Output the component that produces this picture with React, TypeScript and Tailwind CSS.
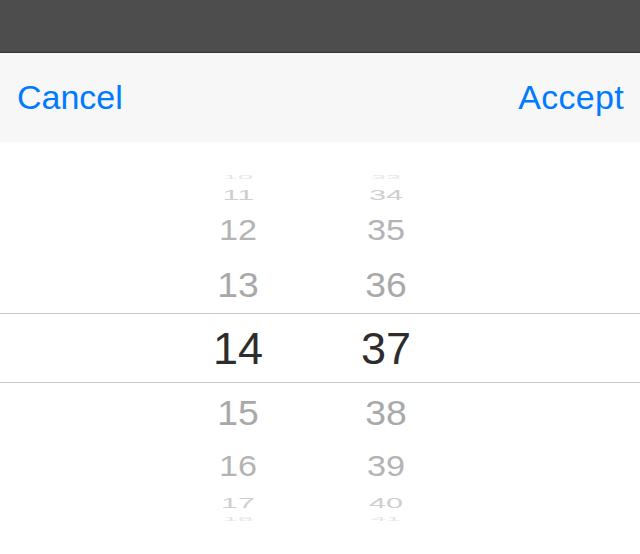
import React from "react";

// wheel rings, from the outermost (barely visible) to the one next to the selection
const rings = [
  { h: "h-[12px]", scale: "scale-x-[0.6] scale-y-[0.1]", color: "text-[#e6e6e6]" },
  { h: "h-[22px]", scale: "scale-x-[0.68] scale-y-[0.34]", color: "text-[#cfcfcf]" },
  { h: "h-[50px]", scale: "scale-x-[0.76] scale-y-[0.64]", color: "text-[#b4b4b4]" },
  { h: "h-[58px]", scale: "scale-x-[0.83] scale-y-[0.79]", color: "text-[#a9a9a9]" },
];

const hour = 14;
const minute = 37;

function WheelRow({ offset }: { offset: number }) {
  const ring = rings[4 - Math.abs(offset)];
  return (
    <div className={`flex ${ring.h} items-center justify-center pr-[16px]`}>
      {[hour + offset, minute + offset].map((n) => (
        <div key={n} className="flex w-[148px] items-center justify-center">
          <span className={`block text-[45px] leading-none ${ring.color} ${ring.scale}`}>{n}</span>
        </div>
      ))}
    </div>
  );
}

export default function App() {
  return (
    <div
      className="flex h-[554px] w-full flex-col overflow-hidden bg-white"
      style={{ fontFamily: '"Liberation Sans", Arial, sans-serif' }}
    >
      {/* dark backdrop */}
      <div className="h-[53px] border-b border-[#333333] bg-[#4d4d4d]" />

      {/* toolbar */}
      <div className="flex h-[89px] items-center justify-between bg-[#f7f7f7] pb-[1px] pl-[17px] pr-[16px]">
        <button className="text-[34px] leading-none text-[#007aff]">Cancel</button>
        <button className="text-[34px] leading-none tracking-[0.3px] text-[#007aff]">Accept</button>
      </div>

      {/* picker */}
      <div className="flex flex-col pt-[29px]">
        {[-4, -3, -2, -1].map((o) => (
          <WheelRow key={o} offset={o} />
        ))}
        <div className="flex h-[70px] items-center justify-center border-y border-[#c9c9c9] pr-[16px]">
          <div className="flex w-[148px] justify-center">
            <span className="block text-[45px] leading-none text-[#2d2d2d]">{hour}</span>
          </div>
          <div className="flex w-[148px] justify-center">
            <span className="block text-[45px] leading-none text-[#2d2d2d]">{minute}</span>
          </div>
        </div>
        {[1, 2, 3, 4].map((o) => (
          <WheelRow key={o} offset={o} />
        ))}
      </div>
    </div>
  );
}
